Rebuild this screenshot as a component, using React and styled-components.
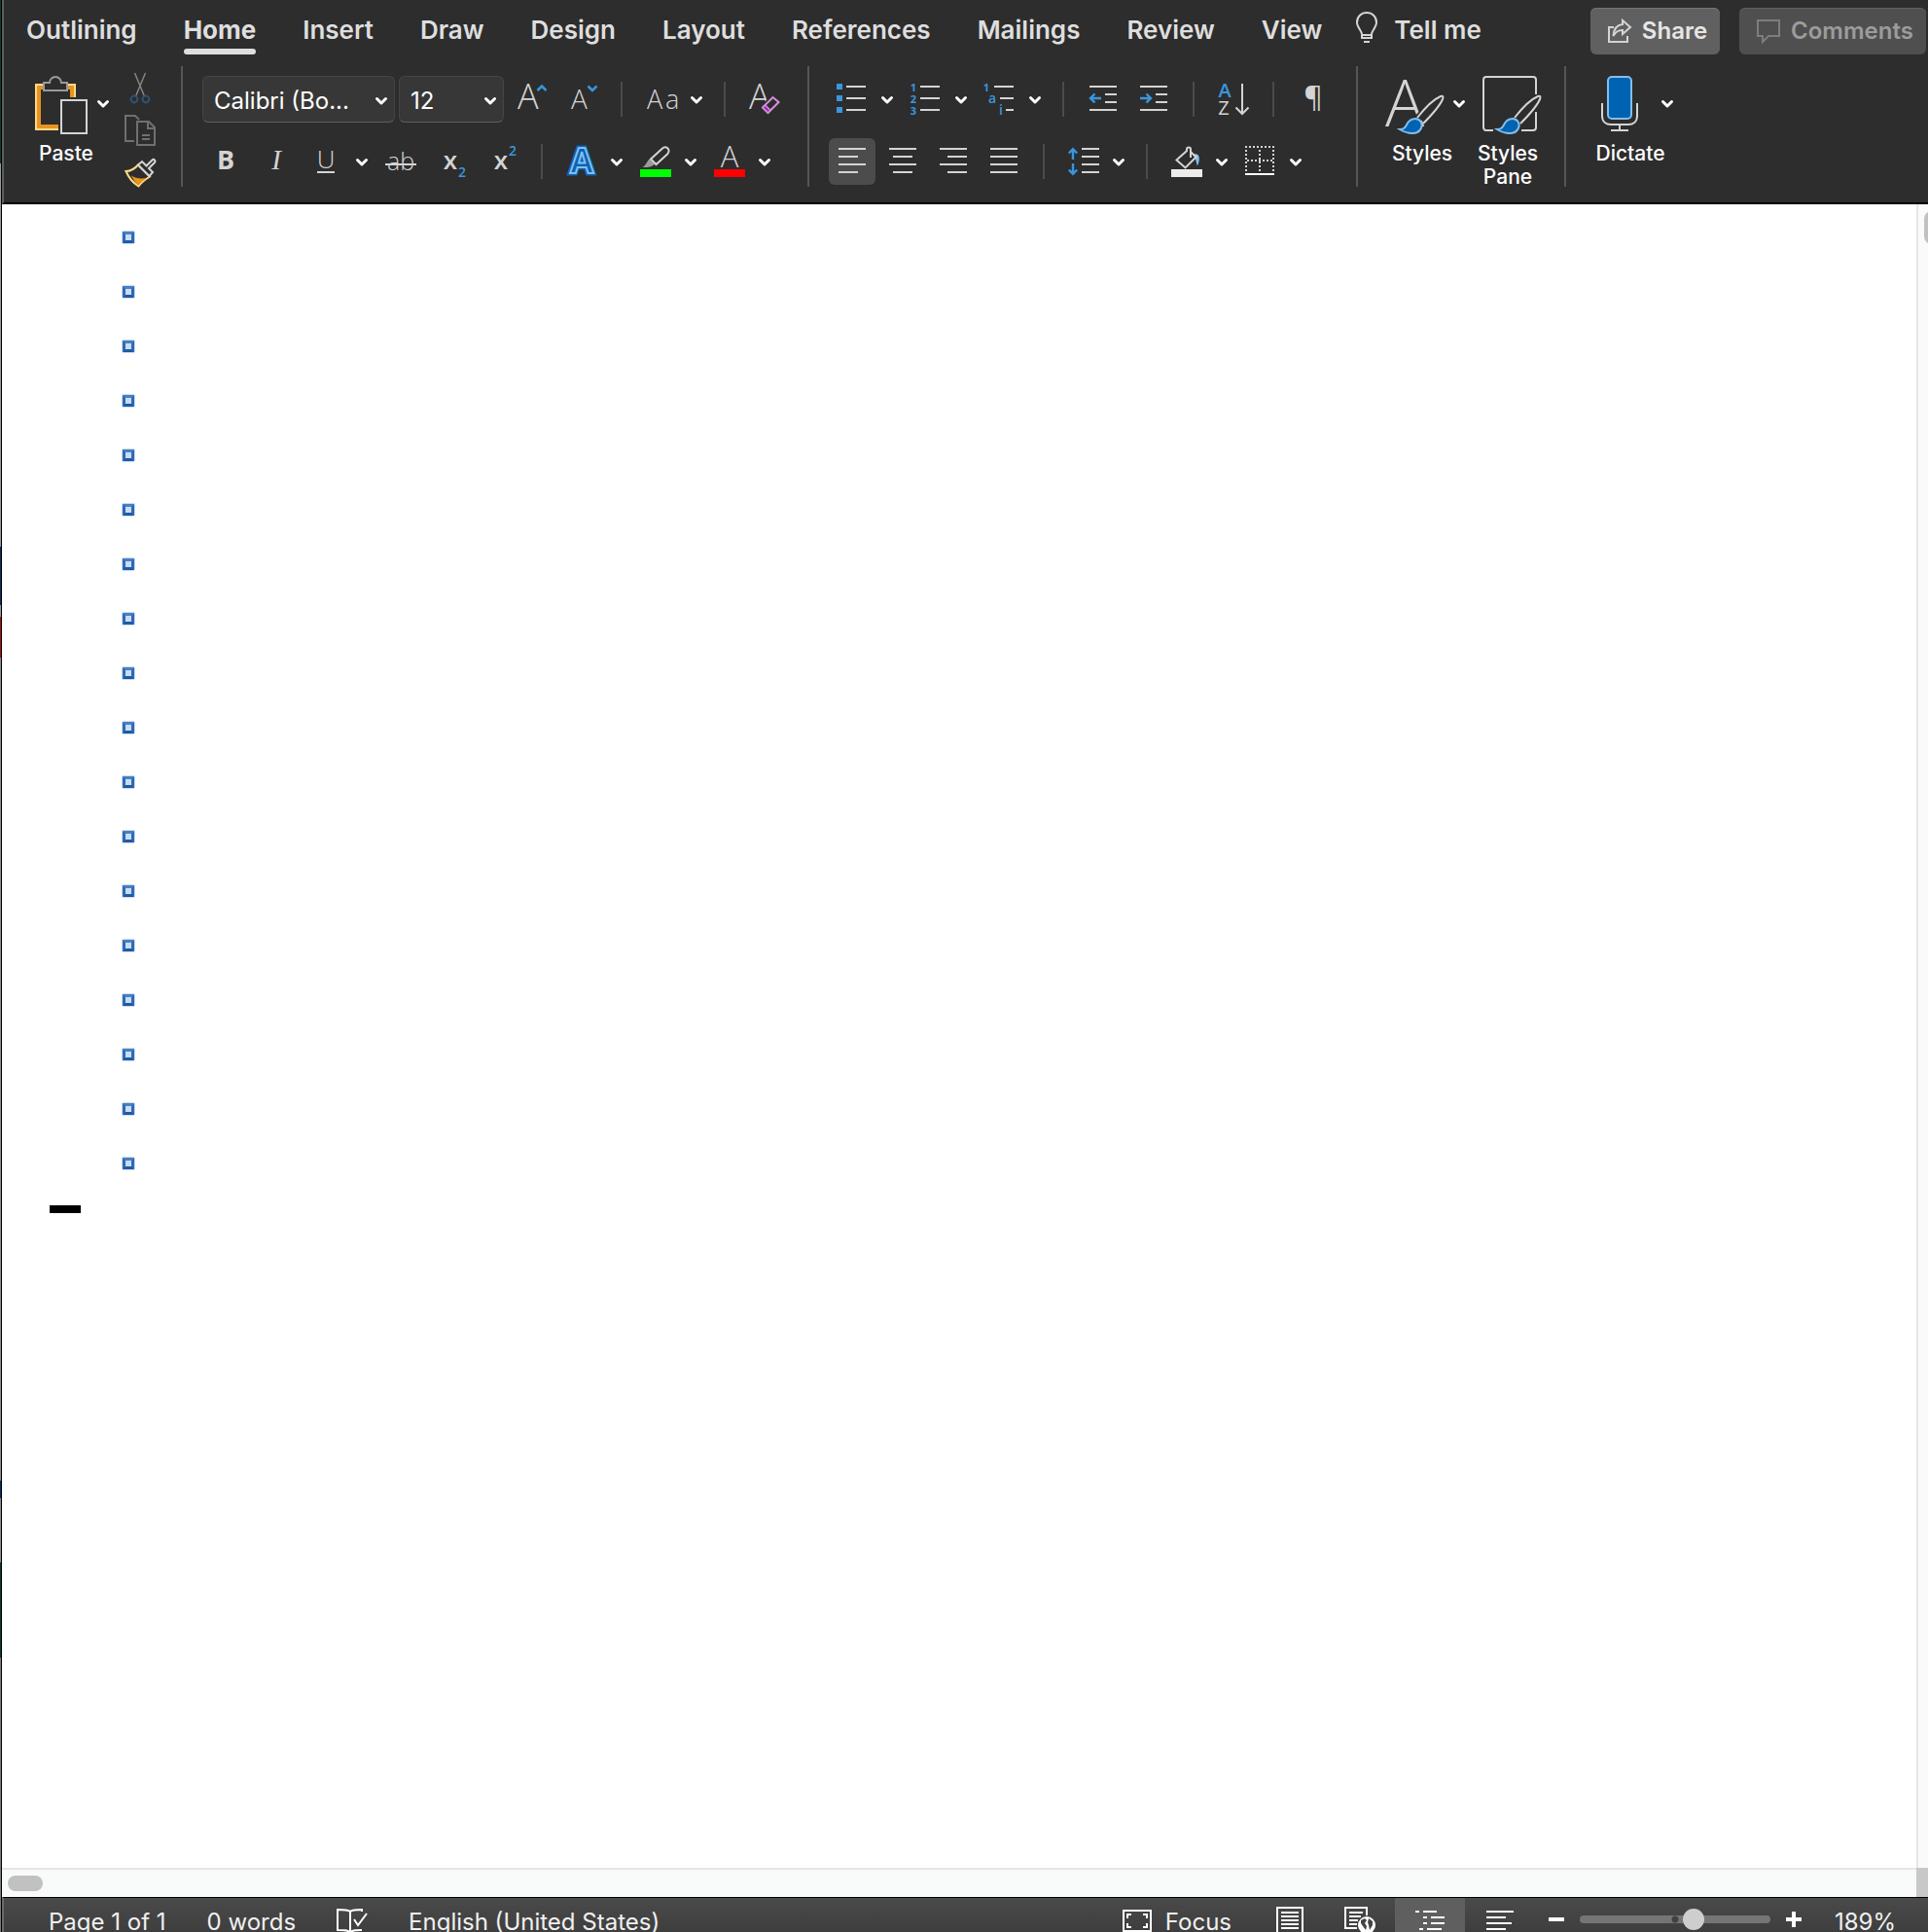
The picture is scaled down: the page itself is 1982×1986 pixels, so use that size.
import styled, { createGlobalStyle } from "styled-components";

const GlobalStyle = createGlobalStyle`
  *,
  *::before,
  *::after {
    box-sizing: border-box;
  }

  html,
  body {
    margin: 0;
    background-color: #8d8d8d;
  }

  body,
  button,
  select,
  input {
    font-family: Inter, "Liberation Sans", sans-serif;
  }

  button {
    border: 0;
    padding: 0;
    background: transparent;
    color: inherit;
    cursor: pointer;
  }

  svg {
    display: block;
    flex: none;
    overflow: visible;
  }
`;

const Backdrop = styled.div`
  padding-left: 1px;
  background: linear-gradient(
    #0b3b2e 0 168px,
    #9a9a9a 168px 562px,
    #0a2f66 562px 622px,
    #9a9a9a 622px 634px,
    #a01515 634px 676px,
    #8d8d8d 676px 1522px,
    #0a2f66 1522px 1540px,
    #8d8d8d 1540px 1606px,
    #0b3b2e 1606px 1704px,
    #7d7d7d 1704px
  );
`;

const Window = styled.div`
  display: flex;
  flex-direction: column;
  height: 100vh;
  border-left: 1px solid #000;
  background-color: #fff;
  overflow: hidden;
`;

const Header = styled.header`
  flex: none;
  border-left: 2px solid #5c5e5f;
  border-bottom: 2px solid #000;
  background-color: #2d2d2d;
  color: #dedede;
`;

const TabBar = styled.nav`
  display: flex;
  height: 56px;
  padding: 8px 2px 0 23px;
`;

const TabList = styled.div`
  display: flex;
  gap: 48px;
`;

const Tab = styled.button`
  height: 48px;
  padding-top: 4px;
  color: #dedede;
  font-size: 26px;
  font-weight: ${(props) => (props.$active ? 700 : 600)};
  line-height: 38px;
  white-space: nowrap;

  &::after {
    content: "";
    display: block;
    height: 6px;
    border-radius: 3px;
    background-color: ${(props) => (props.$active ? "#dedede" : "transparent")};
  }
`;

const TellMe = styled(Tab)`
  display: flex;
  gap: 16px;
  margin-left: 34px;

  &::after {
    display: none;
  }
`;

const TabActions = styled.div`
  display: flex;
  gap: 20px;
  margin-left: auto;
`;

const ActionButton = styled.button`
  display: flex;
  align-items: center;
  justify-content: center;
  gap: 10px;
  width: ${(props) => props.$width}px;
  height: 48px;
  padding-left: 4px;
  border-radius: 6px;
  box-shadow: inset 0 1px ${(props) => (props.disabled ? "#5f5f5f" : "#757575")};
  background-color: ${(props) => (props.disabled ? "#4f4f4f" : "#606060")};
  color: ${(props) => (props.disabled ? "#9c9c9c" : "#e6e6e6")};
  font-size: 24px;
  font-weight: 600;
  line-height: 46px;
`;

const Ribbon = styled.div`
  display: flex;
  padding: 12px 0 16px 18px;
`;

const Group = styled.div`
  display: flex;
  gap: 4px;
  height: 124px;
  padding: 10px 20px 0 20px;
  border-right: ${(props) => (props.$last ? "0" : "2px solid #565656")};

  &:first-child {
    padding-left: 0;
  }
`;

const Rows = styled.div`
  display: flex;
  flex-direction: column;
  gap: 16px;
`;

const Row = styled.div`
  display: flex;
  align-items: center;
  gap: 4px;
  height: 48px;
`;

const Rule = styled.span`
  width: 2px;
  height: 36px;
  margin: 0 12px;
  background-color: #4b4b4b;
`;

const Tool = styled.button`
  display: grid;
  place-items: center;
  width: 48px;
  height: 48px;
  border-radius: 6px;
  background-color: ${(props) => (props.$active ? "#4c4c4c" : "transparent")};
  color: #d2d2d2;
`;

const SplitTool = styled.div`
  display: flex;
`;

const MenuButton = styled.button`
  width: 24px;
  height: 48px;
`;

const ClipboardColumn = styled.div`
  display: flex;
  flex-direction: column;
  height: 132px;
  margin-top: -10px;

  ${Tool} {
    height: 44px;
  }
`;

const Combo = styled.label`
  display: grid;
  width: ${(props) => props.$width}px;
  height: 48px;
  border: 1px solid #454545;
  border-bottom-color: #5e5e5e;
  border-radius: 6px;
  background-color: #373737;

  select {
    grid-area: 1 / 1;
    width: 100%;
    padding: 0 36px 0 11px;
    border: 0;
    background: transparent;
    color: #fff;
    font-size: 24px;
    appearance: none;
  }

  svg {
    grid-area: 1 / 1;
    justify-self: end;
    margin-right: 1px;
    pointer-events: none;
  }
`;

const BigTool = styled.button`
  display: flex;
  flex-direction: column;
  align-items: center;
  gap: 8px;
  width: ${(props) => props.$width}px;
  color: #fff;
  font-size: 21px;
  font-weight: 500;
  line-height: 24px;
`;

const BigToolHead = styled.span`
  display: flex;
  gap: 8px;
  padding-left: ${(props) => (props.$split ? 8 : 0)}px;
`;

const Workspace = styled.main`
  flex: 1;
  display: grid;
  grid-template-columns: 1fr 12px;
  grid-template-rows: 1fr 30px;
  min-height: 0;
`;

const Page = styled.section`
  padding-top: 6px;
  overflow: hidden;
`;

const Outline = styled.ul`
  margin: 0;
  padding: 0 0 0 124px;
  list-style: none;
`;

const OutlineItem = styled.li`
  display: flex;
  align-items: center;
  height: 56px;

  &::before {
    content: "";
    width: 12px;
    height: 12px;
    border: 3px solid #2f6ab3;
    border-top-color: #4a80c4;
    border-bottom-color: #2259a3;
    border-radius: 1px;
    background-color: #c9dcf3;
    box-shadow: 0 0 1px 1px #c8dbf0;
  }
`;

const EndMark = styled.div`
  width: 32px;
  height: 8px;
  margin: 15px 0 0 49px;
  background-color: #000;
`;

const VerticalBar = styled.div`
  padding: 7px 0 0 6px;
  border-left: 2px solid #e6e6e6;
  background-color: #fafafa;
  overflow: hidden;
`;

const HorizontalBar = styled.div`
  padding: 6px;
  border-top: 2px solid #e6e6e6;
  background-color: #f9fafa;
`;

const Thumb = styled.div`
  width: ${(props) => props.$width}px;
  height: ${(props) => props.$height}px;
  border-radius: 8px;
  background-color: #c1c1c1;
`;

const BarCorner = styled.div`
  background-color: #c8c8c8;
`;

const StatusBar = styled.footer`
  flex: none;
  height: 36px;
  border-top: 1px solid #000;
  border-left: 2px solid #6a6a6a;
  background: linear-gradient(#4a4a4a, #3e3e3e);
  color: #f0f0f0;
  overflow: hidden;
`;

const StatusContent = styled.div`
  display: flex;
  align-items: center;
  height: 48px;
  padding: 0 33px 0 46px;
  font-size: 24px;
`;

const StatusGroup = styled.div`
  display: flex;
  align-items: center;
  gap: ${(props) => props.$gap}px;
  margin-right: ${(props) => props.$after}px;
`;

const Spacer = styled.div`
  flex: 1;
`;

const StatusButton = styled.button`
  display: flex;
  align-items: center;
  gap: 14px;
  height: 48px;
  font-size: 24px;
  white-space: nowrap;
`;

const ViewButton = styled.button`
  display: grid;
  place-items: center;
  width: 72px;
  height: 48px;
  background-color: ${(props) => (props.$active ? "#5f5f5f" : "transparent")};
`;

const ZoomStep = styled.button`
  display: grid;
  place-items: center;
  width: 32px;
  height: 44px;
  margin-bottom: 4px;
`;

const ZoomSlider = styled.input`
  width: 196px;
  height: 22px;
  margin: 0 0 4px;
  background: transparent;
  appearance: none;

  &::-webkit-slider-runnable-track {
    height: 8px;
    border-radius: 4px;
    background: radial-gradient(circle at 98px 4px, #414141 3px, #757575 4px);
  }

  &::-webkit-slider-thumb {
    width: 22px;
    height: 22px;
    margin-top: -7px;
    border-radius: 50%;
    background-color: #cecece;
    appearance: none;
  }
`;

const ZoomValue = styled.span`
  width: 89px;
  text-align: right;
`;

const LINE = "#d4d4d4";
const BLUE = "#3a96dd";
const THIN = '"Open Sans", "Noto Sans", sans-serif';

function Icon({ size = 32, width, height, box, children }) {
  const w = width || size;
  const h = height || size;
  return (
    <svg
      width={w}
      height={h}
      viewBox={box || `0 0 ${w} ${h}`}
      fill="none"
      stroke={LINE}
      strokeWidth="2"
      aria-hidden="true"
    >
      {children}
    </svg>
  );
}

function Glyph({ x, y, size, weight = 300, color = LINE, anchor, children }) {
  return (
    <text
      x={x}
      y={y}
      fill={color}
      stroke="none"
      fontFamily={THIN}
      fontSize={size}
      fontWeight={weight}
      textAnchor={anchor}
    >
      {children}
    </text>
  );
}

function Chevron({ big }) {
  return (
    <svg
      width={big ? 16 : 24}
      height={big ? 60 : 48}
      viewBox={big ? "4 -4 16 60" : "0 0 24 48"}
      fill="none"
      stroke="#fff"
      strokeWidth="3"
      strokeLinecap="round"
      strokeLinejoin="round"
      aria-hidden="true"
    >
      <path d="M7.5 22.5 12 27l4.5-4.5" />
    </svg>
  );
}

function IconTool({ label, active, children }) {
  return (
    <Tool type="button" aria-label={label} $active={active}>
      {children}
    </Tool>
  );
}

function MenuTool({ label, children }) {
  return (
    <SplitTool>
      <IconTool label={label}>{children}</IconTool>
      <MenuButton type="button" aria-label={`${label} options`}>
        <Chevron />
      </MenuButton>
    </SplitTool>
  );
}

function PasteIcon() {
  return (
    <Icon size={60}>
      <path d="M14 9H7v46h23" stroke="#ffd98a" />
      <path d="M14 12h-4v40h20" stroke="#e8941f" strokeWidth="4" />
      <path d="M40 9h7v13" stroke="#ffd98a" />
      <path d="M40 12h4v10" stroke="#e8941f" strokeWidth="4" />
      <path
        d="M15 15V7h6c0-3 2.500-6 6-6s6 3 6 6h6v8z"
        stroke="#9a9a9a"
        fill="#2d2d2d"
      />
      <path d="M33 25h26v34H33z" />
    </Icon>
  );
}

function CutIcon() {
  return (
    <Icon box="-2 0 32 32">
      <path d="M10.500 1 20.500 25M21.500 1 11.500 25" stroke="#858585" strokeWidth="1.500" />
      <circle cx="10" cy="28" r="3.400" stroke="#2f5373" />
      <circle cx="22" cy="28" r="3.400" stroke="#2f5373" />
    </Icon>
  );
}

function CopyIcon() {
  return (
    <Icon width={36} height={32} box="-4 0 36 32">
      <g stroke="#707070">
        <path d="M10 27H1V1h10l4 4" />
        <path d="M13 7h12l6 6v18H13z" />
        <path d="M24 7v7h7M18 21h8M18 25h8" />
      </g>
    </Icon>
  );
}

function FormatPainterIcon() {
  return (
    <Icon width={36} height={32} box="-4 0 36 32">
      <path d="M1.500 14C7 14 11 11 14 7.500L26 19.500C22 22 17 26 14.500 29.500 9 26 4 20 1.500 14z" stroke="#ffd98a" />
      <path d="M7 18.500c4 3 10 3.500 15.500 2.500-4 3-6.500 5-8 7.500C11 26 9 22 7 18.500z" fill="#e8941f" stroke="none" />
      <path
        d="M14 7.500 18 4l4.500 4.500 6-6c1.500-1.500 4 0.500 2.500 2.500l-6 6L29 15l-3.500 4z"
        fill="#2d2d2d"
      />
    </Icon>
  );
}

function GrowIcon({ shrink }) {
  return (
    <Icon>
      <Glyph x={shrink ? 5 : 2} y="26" size={shrink ? 28 : 36}>
        A
      </Glyph>
      <path
        d={shrink ? "M22.500 2.500 27 7l4.500-4.500" : "M22.500 7 27 2.500 31.500 7"}
        stroke={BLUE}
        strokeWidth="2.500"
      />
    </Icon>
  );
}

function ClearFormatIcon() {
  return (
    <Icon>
      <Glyph x="0" y="26" size="36">
        A
      </Glyph>
      <path d="M30.500 19 24.500 14 14 24.500l5.500 5.500z" fill="#2d2d2d" stroke="#2d2d2d" strokeWidth="5" />
      <path d="M30.500 19 24.500 14 14 24.500l5.500 5.500z" stroke="#d58fdc" />
      <path d="M16.500 22 14 24.500l5.500 5.500 2.500-2.700z" fill="#9b2fae" stroke="#d58fdc" strokeWidth="1.500" />
    </Icon>
  );
}

function BulletsIcon() {
  return (
    <Icon>
      <path d="M0 0h6v6H0zM0 12h6v6H0zM0 24h6v6H0z" fill={BLUE} stroke="none" />
      <path d="M10 3h20M10 15h20M10 27h20" />
    </Icon>
  );
}

function NumbersIcon() {
  return (
    <Icon>
      <Glyph x="3" y="8" size="11" weight="700" color={BLUE} anchor="middle">1</Glyph>
      <Glyph x="3" y="20" size="11" weight="700" color={BLUE} anchor="middle">2</Glyph>
      <Glyph x="3" y="32" size="11" weight="700" color={BLUE} anchor="middle">3</Glyph>
      <path d="M10 3h20M10 15h20M10 27h20" />
    </Icon>
  );
}

function MultilevelIcon() {
  return (
    <Icon width={36} height={32} box="-2 0 36 32">
      <Glyph x="2" y="8" size="11" weight="700" color={BLUE} anchor="middle">1</Glyph>
      <Glyph x="8" y="20" size="14" weight="600" color={BLUE} anchor="middle">a</Glyph>
      <Glyph x="17" y="32" size="14" weight="600" color={BLUE} anchor="middle">i</Glyph>
      <path d="M10 3h20M16 15h14M22 27h8" />
    </Icon>
  );
}

function IndentIcon({ out }) {
  return (
    <Icon>
      <path d="M2 3h28M18 11h12M18 19h12M2 27h28" />
      <path
        d={out ? "M14 15H3.500M7.500 10.500 3 15l4.500 4.500" : "M2 15h10.500M8.500 10.500 13 15l-4.500 4.500"}
        stroke={BLUE}
        strokeWidth="2.400"
      />
    </Icon>
  );
}

function SortIcon() {
  return (
    <Icon>
      <Glyph x="7" y="14" size="20" weight="600" color={BLUE} anchor="middle">A</Glyph>
      <Glyph x="6" y="32" size="20" weight="400" anchor="middle">Z</Glyph>
      <path d="M25 0v31M18.500 24.500 25 31l6.500-6.500" />
    </Icon>
  );
}

// each entry is the [start, end] of one text line, 8px apart
const ALIGN_LINES = {
  left: [[2, 30], [2, 22], [2, 30], [2, 22]],
  center: [[2, 30], [6, 26], [2, 30], [6, 26]],
  right: [[2, 30], [10, 30], [2, 30], [10, 30]],
  justify: [[2, 30], [2, 30], [2, 30], [2, 30]],
};

function AlignIcon({ kind }) {
  return (
    <Icon>
      {ALIGN_LINES[kind].map(([from, to], i) => (
        <path key={i} d={`M${from} ${3 + i * 8}H${to}`} />
      ))}
    </Icon>
  );
}

function LineSpacingIcon() {
  return (
    <Icon>
      <path d="M5 14V3.500M0.800 7.500 5 3.200l4.200 4.300M5 18v10.500M0.800 24.500 5 28.800l4.200-4.300" stroke={BLUE} strokeWidth="2.400" />
      <path d="M14 3h18M14 11h18M14 19h18M14 27h18" />
    </Icon>
  );
}

function TextEffectsIcon() {
  const props = {
    x: 16,
    y: 28,
    textAnchor: "middle",
    fontFamily: THIN,
    fontSize: 35,
    fontWeight: 700,
  };
  return (
    <Icon>
      <text {...props} stroke="#0a62b3" strokeWidth="5">A</text>
      <text {...props} stroke="#83beec" strokeWidth="2" fill="#0a62b3">A</text>
    </Icon>
  );
}

function HighlightIcon() {
  return (
    <Icon>
      <path d="M2.500 22C6 20 7 16 9.500 13.500L15 18.500C13 21.500 8 22 2.500 22z" fill="#9c9c9c" stroke="none" />
      <path d="M11 13.500 23 2.500c2-2 4-1.500 5.500 0s1.500 4-0.500 6L16.500 19z" />
      <path d="M0 24h32v8H0z" fill="#00ff00" stroke="none" />
    </Icon>
  );
}

function FontColorIcon() {
  return (
    <Icon>
      <Glyph x="16" y="22" size="31" anchor="middle">A</Glyph>
      <path d="M0 24h32v8H0z" fill="#ff0000" stroke="none" />
    </Icon>
  );
}

function ShadingIcon() {
  return (
    <Icon>
      <path d="M22 9c4-2 7 0 6.800 4 0 3-.8 5-1.800 7.500C25.500 17 26 13 22 9z" fill="#83beec" stroke="none" />
      <path d="M20 12V3.500C20 .8 16 .8 16 3.500V5L5.500 14.500 14.500 22.500 25.500 11.500 20 6" />
      <path d="M0 24h32v8H0z" fill="#ececec" stroke="none" />
    </Icon>
  );
}

function BordersIcon() {
  return (
    <Icon>
      <path d="M0 1h30M1 4v22M29 4v22M2 15h26M15 4v22" strokeDasharray="2 2" />
      <path d="M0 29h30" stroke="#fff" />
    </Icon>
  );
}

function BrushShape() {
  return (
    <g>
      <path d="M33 43C40 34 50 24 57 21c2.500-.8 3 .5 2 3C56 31 47 41 39 49" />
      <path
        d="M15 55c5 0 6-3 8-6.500 3-5 10-6 13.500-1.500C39.500 52 36 59 28 59c-5 0-9-1.500-13-4z"
        fill="#0063b1"
        stroke="#83beec"
      />
    </g>
  );
}

function StylesIcon() {
  return (
    <Icon size={60}>
      <Glyph x="0" y="52" size="67">A</Glyph>
      <path d="M30 48 50 26" stroke="#2d2d2d" strokeWidth="8" />
      <BrushShape />
    </Icon>
  );
}

function StylesPaneIcon() {
  return (
    <Icon width={76} height={60} box="-12 0 76 60">
      <path d="M11 56H4c-2 0-3-1-3-3V4c0-2 1-3 3-3h48c2 0 3 1 3 3v15M55 37v16c0 2-1 3-3 3H40" />
      <BrushShape />
    </Icon>
  );
}

function DictateIcon() {
  return (
    <Icon size={60}>
      <rect x="15" y="1" width="24" height="43" rx="4" fill="#0063b1" stroke="#83beec" />
      <path d="M9 28v13c0 6 4 9 9 9h18c5 0 9-3 9-9V28M27 50v6M18 56h18" />
    </Icon>
  );
}

function BulbIcon() {
  return (
    <Icon width={24} height={34}>
      <path d="M7 23v4h10v-4c0-3 5-7 5-12C22 5 17.500 1 12 1S2 5 2 11c0 5 5 9 5 12zM7 24h10M9 31h6" />
    </Icon>
  );
}

function ShareIcon() {
  return (
    <Icon width={26} height={26}>
      <path d="M7 9H2v15h19v-6" />
      <path d="M16 6V2l8 7-8 7v-4c-5 0-7 2-9.500 6C7 10 11 6.500 16 6z" />
    </Icon>
  );
}

function CommentIcon() {
  return (
    <Icon width={26} height={26}>
      <path d="M2 2h22v16H13l-6 6v-6H2z" stroke="#7d7d7d" />
    </Icon>
  );
}

function ProofingIcon() {
  return (
    <Icon width={32} height={28}>
      <path d="M14 4C12 2 8 2 1 2v21c7 0 11 0 13 2.500C16 23 20 23 26 23M14 4c2-2 6-2 12-2v2M14 4v22M18 12l4 6 9-12" stroke="#fff" />
    </Icon>
  );
}

function FocusIcon() {
  return (
    <Icon width={30} height={24}>
      <g stroke="#fff">
        <path d="M1 1h28v21H1z" />
        <path d="M5 9V5h4M21 5h4v4M25 14v4h-4M9 18H5v-4" />
      </g>
    </Icon>
  );
}

function PrintLayoutIcon() {
  return (
    <Icon width={28} height={30}>
      <path d="M1 1h26v27H1zM5 6h18M5 10h18M5 14h18M5 18h18M5 22h18" stroke="#fff" />
    </Icon>
  );
}

function WebLayoutIcon() {
  return (
    <Icon width={32} height={30}>
      <path d="M13 22H1V1h22v8M5 6h14M5 10h12M5 14h9M5 18h8" stroke="#fff" />
      <circle cx="23" cy="19" r="9" fill="#fff" stroke="none" />
      <path
        d="M17 14l4-2 2 2-2 3 2 3-1 4-3-4-2-3zM25 12l4 3v4l-3 5-1-5-1-3z"
        fill="#444"
        stroke="none"
      />
    </Icon>
  );
}

function OutlineViewIcon() {
  return (
    <Icon width={30} height={26}>
      <path d="M0 3h4M8 3h14M8 9h4M16 9h14M8 15h4M16 15h14M4 21h4M12 21h15" stroke="#fff" />
    </Icon>
  );
}

function DraftIcon() {
  return (
    <Icon width={28} height={26}>
      <path d="M0 3h28M0 9h20M0 15h26M0 21h20" stroke="#fff" />
    </Icon>
  );
}

const TABS = [
  "Outlining",
  "Home",
  "Insert",
  "Draw",
  "Design",
  "Layout",
  "References",
  "Mailings",
  "Review",
  "View",
];

const OUTLINE_LINES = Array.from({ length: 18 }, (_, i) => i);

function TopTabs() {
  return (
    <TabBar>
      <TabList>
        {TABS.map((tab) => (
          <Tab key={tab} type="button" $active={tab === "Home"}>
            {tab}
          </Tab>
        ))}
      </TabList>
      <TellMe type="button">
        <BulbIcon />
        Tell me
      </TellMe>
      <TabActions>
        <ActionButton type="button" $width={133}>
          <ShareIcon />
          Share
        </ActionButton>
        <ActionButton type="button" $width={192} disabled>
          <CommentIcon />
          Comments
        </ActionButton>
      </TabActions>
    </TabBar>
  );
}

function ClipboardGroup() {
  return (
    <Group>
      <BigTool type="button" $width={92}>
        <BigToolHead $split>
          <PasteIcon />
          <Chevron big />
        </BigToolHead>
        Paste
      </BigTool>
      <ClipboardColumn>
        <IconTool label="Cut"><CutIcon /></IconTool>
        <IconTool label="Copy"><CopyIcon /></IconTool>
        <IconTool label="Format painter"><FormatPainterIcon /></IconTool>
      </ClipboardColumn>
    </Group>
  );
}

function FontGroup() {
  return (
    <Group>
      <Rows>
        <Row>
          <Combo $width={198}>
            <select aria-label="Font">
              <option>Calibri (Bo...</option>
            </select>
            <Chevron />
          </Combo>
          <Combo $width={108}>
            <select aria-label="Font size">
              <option>12</option>
            </select>
            <Chevron />
          </Combo>
          <IconTool label="Grow font"><GrowIcon /></IconTool>
          <IconTool label="Shrink font"><GrowIcon shrink /></IconTool>
          <Rule />
          <MenuTool label="Change case">
            <Icon>
              <Glyph x="1" y="26" size="27">A</Glyph>
              <Glyph x="20" y="26" size="27">a</Glyph>
            </Icon>
          </MenuTool>
          <Rule />
          <IconTool label="Clear formatting"><ClearFormatIcon /></IconTool>
        </Row>
        <Row>
          <IconTool label="Bold">
            <Icon>
              <Glyph x="16" y="24" size="27" weight="700" anchor="middle">B</Glyph>
            </Icon>
          </IconTool>
          <IconTool label="Italic">
            <Icon>
              <text x="16" y="24" fill={LINE} stroke="none" fontFamily='"Liberation Serif", serif' fontStyle="italic" fontSize="29" textAnchor="middle">
                I
              </text>
            </Icon>
          </IconTool>
          <MenuTool label="Underline">
            <Icon>
              <Glyph x="15" y="23" size="26" anchor="middle">U</Glyph>
              <path d="M6 27h18" />
            </Icon>
          </MenuTool>
          <IconTool label="Strikethrough">
            <Icon>
              <Glyph x="16" y="25" size="25" anchor="middle">ab</Glyph>
              <path d="M0 19h32" />
            </Icon>
          </IconTool>
          <IconTool label="Subscript">
            <Icon>
              <Glyph x="15" y="24" size="26" weight="600" anchor="middle">x</Glyph>
              <Glyph x="27" y="32" size="14" weight="600" color={BLUE} anchor="middle">2</Glyph>
            </Icon>
          </IconTool>
          <IconTool label="Superscript">
            <Icon>
              <Glyph x="15" y="24" size="26" weight="600" anchor="middle">x</Glyph>
              <Glyph x="27" y="10" size="14" weight="600" color={BLUE} anchor="middle">2</Glyph>
            </Icon>
          </IconTool>
          <Rule />
          <MenuTool label="Text effects"><TextEffectsIcon /></MenuTool>
          <MenuTool label="Highlight color"><HighlightIcon /></MenuTool>
          <MenuTool label="Font color"><FontColorIcon /></MenuTool>
        </Row>
      </Rows>
    </Group>
  );
}

function ParagraphGroup() {
  return (
    <Group>
      <Rows>
        <Row>
          <MenuTool label="Bullets"><BulletsIcon /></MenuTool>
          <MenuTool label="Numbering"><NumbersIcon /></MenuTool>
          <MenuTool label="Multilevel list"><MultilevelIcon /></MenuTool>
          <Rule />
          <IconTool label="Decrease indent"><IndentIcon out /></IconTool>
          <IconTool label="Increase indent"><IndentIcon /></IconTool>
          <Rule />
          <IconTool label="Sort"><SortIcon /></IconTool>
          <Rule />
          <IconTool label="Show paragraph marks">
            <Icon>
              <Glyph x="16" y="24" size="30" weight="400" anchor="middle">¶</Glyph>
            </Icon>
          </IconTool>
        </Row>
        <Row>
          <IconTool label="Align left" active><AlignIcon kind="left" /></IconTool>
          <IconTool label="Align center"><AlignIcon kind="center" /></IconTool>
          <IconTool label="Align right"><AlignIcon kind="right" /></IconTool>
          <IconTool label="Justify"><AlignIcon kind="justify" /></IconTool>
          <Rule />
          <MenuTool label="Line spacing"><LineSpacingIcon /></MenuTool>
          <Rule />
          <MenuTool label="Shading"><ShadingIcon /></MenuTool>
          <MenuTool label="Borders"><BordersIcon /></MenuTool>
        </Row>
      </Rows>
    </Group>
  );
}

function App() {
  return (
    <Backdrop>
      <GlobalStyle />
      <Window>
        <Header>
          <TopTabs />
          <Ribbon>
            <ClipboardGroup />
            <FontGroup />
            <ParagraphGroup />
            <Group>
              <BigTool type="button" $width={92}>
                <BigToolHead $split>
                  <StylesIcon />
                  <Chevron big />
                </BigToolHead>
                Styles
              </BigTool>
              <BigTool type="button" $width={76}>
                <BigToolHead>
                  <StylesPaneIcon />
                </BigToolHead>
                Styles Pane
              </BigTool>
            </Group>
            <Group $last>
              <BigTool type="button" $width={92}>
                <BigToolHead $split>
                  <DictateIcon />
                  <Chevron big />
                </BigToolHead>
                Dictate
              </BigTool>
            </Group>
          </Ribbon>
        </Header>
        <Workspace>
          <Page>
            <Outline>
              {OUTLINE_LINES.map((line) => (
                <OutlineItem key={line} />
              ))}
            </Outline>
            <EndMark />
          </Page>
          <VerticalBar>
            <Thumb $width={16} $height={34} />
          </VerticalBar>
          <HorizontalBar>
            <Thumb $width={36} $height={16} />
          </HorizontalBar>
          <BarCorner />
        </Workspace>
        <StatusBar>
          <StatusContent>
            <StatusGroup $gap={42} $after={0}>
              <StatusButton type="button">Page 1 of 1</StatusButton>
              <StatusButton type="button">0 words</StatusButton>
              <StatusButton type="button" aria-label="Proofing"><ProofingIcon /></StatusButton>
              <StatusButton type="button">English (United States)</StatusButton>
            </StatusGroup>
            <Spacer />
            <StatusGroup $gap={0} $after={24}>
              <StatusButton type="button">
                <FocusIcon />
                Focus
              </StatusButton>
            </StatusGroup>
            <StatusGroup $gap={0} $after={6}>
              <ViewButton type="button" aria-label="Print layout"><PrintLayoutIcon /></ViewButton>
              <ViewButton type="button" aria-label="Web layout"><WebLayoutIcon /></ViewButton>
              <ViewButton type="button" aria-label="Outline" $active><OutlineViewIcon /></ViewButton>
              <ViewButton type="button" aria-label="Draft"><DraftIcon /></ViewButton>
            </StatusGroup>
            <StatusGroup $gap={8} $after={0}>
              <ZoomStep type="button" aria-label="Zoom out">
                <Icon size={16}><path d="M0 8h16" stroke="#fff" strokeWidth="4" /></Icon>
              </ZoomStep>
              <ZoomSlider type="range" aria-label="Zoom" min="0" max="100" defaultValue="61" />
              <ZoomStep type="button" aria-label="Zoom in">
                <Icon size={16}><path d="M0 8h16M8 0v16" stroke="#fff" strokeWidth="4" /></Icon>
              </ZoomStep>
            </StatusGroup>
            <ZoomValue>189%</ZoomValue>
          </StatusContent>
        </StatusBar>
      </Window>
    </Backdrop>
  );
}

export default App;
